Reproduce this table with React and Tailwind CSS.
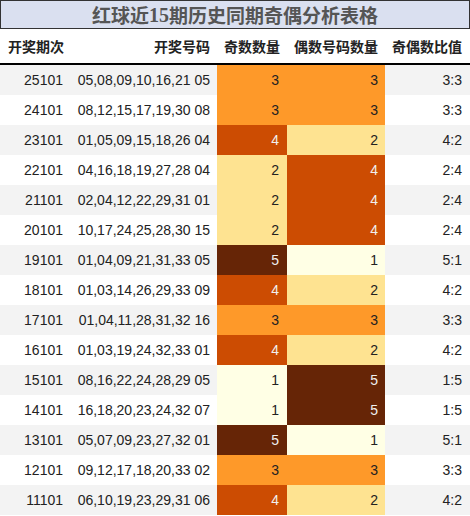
import React from 'react';

const rows = [
  ['25101', '05,08,09,10,16,21 05', 3, 3],
  ['24101', '08,12,15,17,19,30 08', 3, 3],
  ['23101', '01,05,09,15,18,26 04', 4, 2],
  ['22101', '04,16,18,19,27,28 04', 2, 4],
  ['21101', '02,04,12,22,29,31 01', 2, 4],
  ['20101', '10,17,24,25,28,30 15', 2, 4],
  ['19101', '01,04,09,21,31,33 05', 5, 1],
  ['18101', '01,03,14,26,29,33 09', 4, 2],
  ['17101', '01,04,11,28,31,32 16', 3, 3],
  ['16101', '01,03,19,24,32,33 01', 4, 2],
  ['15101', '08,16,22,24,28,29 05', 1, 5],
  ['14101', '16,18,20,23,24,32 07', 1, 5],
  ['13101', '05,07,09,23,27,32 01', 5, 1],
  ['12101', '09,12,17,18,20,33 02', 3, 3],
  ['11101', '06,10,19,23,29,31 06', 4, 2],
];

// YlOrBr-ish scale
const cellColor = {
  1: 'bg-[#ffffe5] text-[#222]',
  2: 'bg-[#fee391] text-[#222]',
  3: 'bg-[#fe9929] text-[#222]',
  4: 'bg-[#cc4c02] text-[#f0f0f0]',
  5: 'bg-[#662506] text-[#f0f0f0]',
};

export default function App() {
  return (
    <div className="w-[470px] h-[516px] bg-white overflow-hidden font-['Liberation_Sans','Noto_Sans_CJK_SC',sans-serif] text-[14px] text-[#222]">
      <div className="h-[29px] border border-[#333] bg-[#dae0f0] flex items-center justify-center text-[19px] font-bold text-[#555] font-['Noto_Sans_CJK_SC',sans-serif] leading-none">
        红球近<span className="font-['Liberation_Serif',serif] text-[20px]">15</span>期历史同期奇偶分析表格
      </div>

      <div className="grid grid-cols-[67px_150px_70px_98px_85px] h-[36px] border-b-2 border-black font-bold font-['Noto_Sans_CJK_SC',sans-serif] text-[14px] items-center">
        <div className="pl-2">开奖期次</div>
        <div className="text-right pr-[7px]">开奖号码</div>
        <div className="text-right pr-[7px]">奇数数量</div>
        <div className="text-right pr-[7px]">偶数号码数量</div>
        <div className="text-right pr-[8px]">奇偶数比值</div>
      </div>

      {rows.map(([issue, nums, odd, even], i) => {
        const stripe = i % 2 === 0 ? 'bg-[#f3f3f3]' : 'bg-white';
        return (
          <div key={issue} className="grid grid-cols-[67px_150px_70px_98px_85px] h-[30px] items-stretch">
            <div className={`${stripe} flex items-center justify-end pr-[4px]`}>{issue}</div>
            <div className={`${stripe} flex items-center justify-end pr-[7px]`}>{nums}</div>
            <div className={`${cellColor[odd]} flex items-center justify-end pr-[8px]`}>{odd}</div>
            <div className={`${cellColor[even]} flex items-center justify-end pr-[7px]`}>{even}</div>
            <div className={`${stripe} flex items-center justify-end pr-[8px]`}>{odd}:{even}</div>
          </div>
        );
      })}
    </div>
  );
}
